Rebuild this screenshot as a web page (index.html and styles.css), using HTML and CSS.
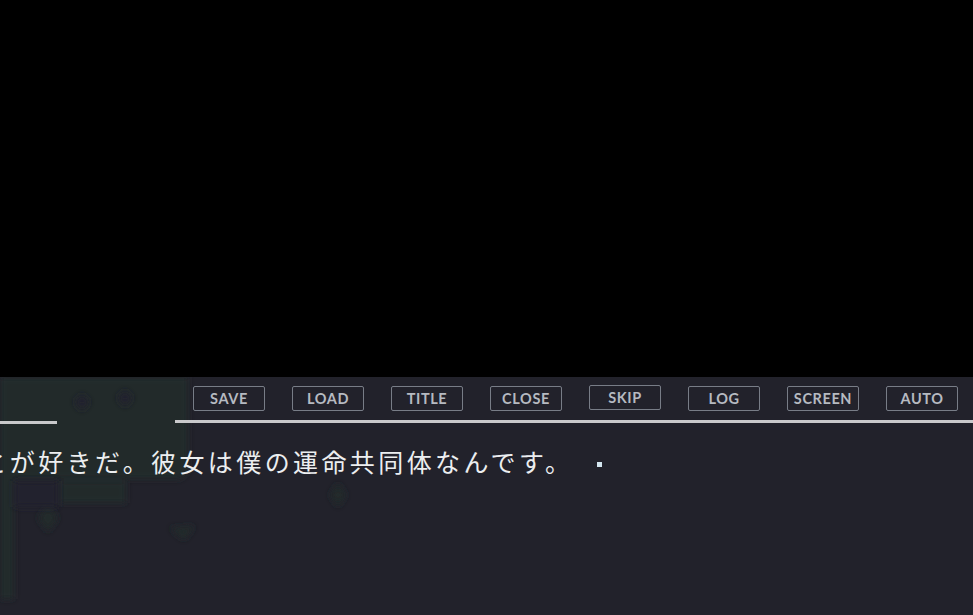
FILE: index.html
```html
<!DOCTYPE html>
<html lang="ja">
<head>
  <meta charset="UTF-8" />
  <title>Message Window</title>
  <link rel="stylesheet" href="styles.css">
</head>
<body>

  <div class="scene"></div>

  <div class="msg-window">
    <!-- faint background art behind the window -->
    <svg class="backdrop" width="973" height="238" viewBox="0 0 973 238">
      <defs>
        <filter id="soft"><feGaussianBlur stdDeviation="3" /></filter>
      </defs>
      <g fill="#212c2a" filter="url(#soft)">
        <path d="M0 0 H188 V95 L180 102 H14 V222 H0 Z" />
        <path d="M60 104 H126 V126 H60 Z" />
        <path d="M48 128 L58 141 L48 155 L38 141 Z" />
        <path d="M170 151 L195 149 L184 163 Z" />
        <path d="M338 106 L346 118 L338 130 L330 118 Z" />
      </g>
      <g fill="#23232d" filter="url(#soft)">
        <path d="M82 17 L90 25 L82 34 L74 25 Z" />
        <path d="M125 13 L133 21 L125 30 L117 21 Z" />
        <path d="M14 104 H58 V130 H14 Z" />
      </g>
    </svg>

    <div class="menu">
      <button class="menu-btn">SAVE</button>
      <button class="menu-btn">LOAD</button>
      <button class="menu-btn">TITLE</button>
      <button class="menu-btn">CLOSE</button>
      <button class="menu-btn skip">SKIP</button>
      <button class="menu-btn">LOG</button>
      <button class="menu-btn">SCREEN</button>
      <button class="menu-btn">AUTO</button>
    </div>

    <div class="rule">
      <div class="rule-left"></div>
      <div class="rule-right"></div>
    </div>

    <p class="line">ことが好きだ。彼女は僕の運命共同体なんです。<span class="wait"></span></p>
  </div>

</body>
</html>
```

FILE: styles.css
```css
body {
  margin: 0;
  background: #000;
  width: 973px;
  height: 615px;
  overflow: hidden;
}

.scene { height: 377px; background: #000; }

.msg-window {
  position: relative;
  height: 238px;
  background: #22222b;
  overflow: hidden;
}

.backdrop {
  position: absolute;
  top: 0; left: 0;
}

.menu {
  position: relative;
  display: flex;
  gap: 27px;
  padding: 9px 0 0 193px;
}

.menu-btn {
  width: 72px;
  height: 25px;
  padding: 0;
  background: transparent;
  border: 1.5px solid #787d87;
  border-radius: 2px;
  color: #b6bac1;
  font-family: Lato, "Liberation Sans", sans-serif;
  font-weight: 700;
  font-size: 14.5px;
  letter-spacing: 0.6px;
  line-height: 22px;
}

.menu-btn.skip { line-height: 19px; margin-top: -1px; }

.rule {
  position: relative;
  display: flex;
  margin-top: 10px;
}

.rule-left {
  width: 57px;
  height: 3px;
  background: #c9c9cb;
}

.rule-right {
  flex: 1;
  height: 3px;
  margin-left: 118px;
  margin-top: -1px;
  background: #c9c9cb;
}

.line {
  position: relative;
  margin: 25px 0 0 -47px;
  white-space: nowrap;
  color: #eceef0;
  font-family: "Noto Sans CJK JP", sans-serif;
  font-size: 25px;
  letter-spacing: 3.4px;
  line-height: 1;
}

.wait {
  display: inline-block;
  width: 5px;
  height: 5px;
  margin-left: 24px;
  vertical-align: 5px;
  background: #d4e6f0;
}
```
